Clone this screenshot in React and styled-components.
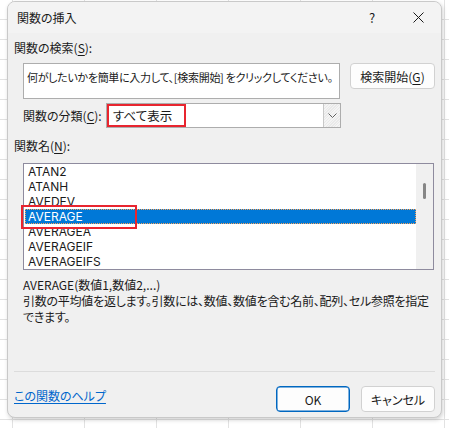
import React from "react";
import styled, { createGlobalStyle } from "styled-components";

const Global = createGlobalStyle`
  html, body {
    margin: 0;
    padding: 0;
  }
  body {
    width: 449px;
    height: 428px;
    overflow: hidden;
    font-family: "Noto Sans CJK JP", "Noto Sans", sans-serif;
    font-size: 12px;
    color: #1a1a1a;
    background-color: #ffffff;
    background-image:
      repeating-linear-gradient(to bottom, transparent 0 19px, #e2e2e2 19px 20px),
      repeating-linear-gradient(to right, transparent 0 12px, #e2e2e2 12px 13px, transparent 13px 72px);
  }
`;

const Page = styled.div`
  padding: 1px 0 0 7px;
`;

const Dialog = styled.div`
  width: 433px;
  height: 415px;
  background: #f0f0f0;
  border: 1px solid #c9c9c9;
  border-radius: 8px;
  box-shadow: 1px 2px 4px rgba(0, 0, 0, 0.18);
  overflow: hidden;
  display: flex;
  flex-direction: column;
  font-feature-settings: "palt";
`;

const TitleBar = styled.div`
  height: 31px;
  background: #f3f3f3;
  display: flex;
  align-items: center;
  padding-left: 9px;
`;

const Title = styled.div`
  flex: 1;
  font-size: 12px;
`;

const TitleButton = styled.div`
  width: 46px;
  height: 31px;
  display: flex;
  align-items: center;
  justify-content: center;
  font-size: 13px;
`;

const Body = styled.div`
  flex: 1;
  display: flex;
  flex-direction: column;
  padding: 7px 6px 0 6px;
`;

const Label = styled.div`
  height: 16px;
  line-height: 16px;
  white-space: nowrap;
`;

const Key = styled.span`
  text-decoration: underline;
  text-underline-offset: 2px;
`;

const SearchRow = styled.div`
  display: flex;
  align-items: flex-start;
  margin: 7px 0 0 9px;
`;

const SearchBox = styled.div`
  background: #fff;
  border: 1px solid #adadad;
  padding: 5px 3px 0 3px;
  box-sizing: border-box;
  width: 317px;
  height: 36px;
  line-height: 16px;
  font-size: 11px;
  white-space: nowrap;
  overflow: hidden;
  letter-spacing: -0.3px;
`;

const Button = styled.div`
  width: ${(p) => p.w}px;
  height: 24px;
  margin-left: ${(p) => p.ml || 0}px;
  background: #fdfdfd;
  border: 1px solid ${(p) => (p.primary ? "#0067c0" : "#d1d1d1")};
  box-shadow: ${(p) => (p.primary ? "inset 0 0 0 0.5px #0067c0" : "none")};
  border-radius: 4px;
  display: flex;
  align-items: center;
  justify-content: center;
  font-size: 12px;
  white-space: nowrap;
`;

const CategoryRow = styled.div`
  display: flex;
  align-items: center;
  margin: 4px 0 0 9px;
  height: 25px;
`;

const SelectBox = styled.div`
  position: relative;
  margin-left: auto;
  margin-right: 94px;
  width: 235px;
  height: 25px;
  box-sizing: border-box;
  background: #fff;
  border: 1px solid #adadad;
  display: flex;
  align-items: center;
`;

const SelectText = styled.div`
  flex: 1;
  padding-left: 6px;
  font-size: 12.5px;
`;

const DropButton = styled.div`
  width: 16px;
  height: 23px;
  border-left: 1px solid #c8c8c8;
  background: repeating-linear-gradient(135deg, #f4f4f4 0 1px, #e9e9e9 1px 2px);
  display: flex;
  align-items: center;
  justify-content: center;
`;

const Highlight = styled.div`
  position: absolute;
  left: ${(p) => p.x}px;
  top: ${(p) => p.y}px;
  width: ${(p) => p.w}px;
  height: ${(p) => p.h}px;
  border: 2px solid #e8252f;
  box-sizing: border-box;
  pointer-events: none;
`;

const ListBox = styled.div`
  position: relative;
  margin: 9px 0 0 9px;
  width: 411px;
  height: 107px;
  box-sizing: border-box;
  border: 1px solid #8e8b9e;
  background: #fff;
  display: flex;
`;

const Items = styled.div`
  flex: 1;
  padding: 0 0 0 1px;
`;

const Item = styled.div`
  height: 15px;
  line-height: 15px;
  padding-left: 3px;
  box-sizing: border-box;
  font-family: Inter, "Noto Sans", sans-serif;
  font-size: 12px;
  color: ${(p) => (p.selected ? "#fff" : "#1a1a1a")};
  background: ${(p) => (p.selected ? "#0078d7" : "transparent")};
  outline: ${(p) => (p.selected ? "1px dotted #f9a35a" : "none")};
  outline-offset: -1px;
`;

const ScrollTrack = styled.div`
  width: 17px;
  background: #f0f0f0;
  display: flex;
  justify-content: center;
  padding-top: 19px;
`;

const Thumb = styled.div`
  width: 3px;
  height: 16px;
  border-radius: 2px;
  background: #868686;
`;

const Syntax = styled.div`
  margin: 6px 0 0 9px;
  line-height: 17px;
`;

const Description = styled.div`
  margin-left: 9px;
  line-height: 16px;
  white-space: nowrap;
  letter-spacing: -0.25px;
`;

const Separator = styled.div`
  margin-top: auto;
  height: 1px;
  background: #dcdcdc;
`;

const Footer = styled.div`
  height: 45px;
  display: flex;
  align-items: flex-start;
  padding-top: 14px;
  box-sizing: border-box;
`;

const HelpLink = styled.a`
  flex: 1;
  color: #0066cc;
  text-decoration: underline;
  text-underline-offset: 2px;
  font-size: 12px;
  line-height: 16px;
  margin-top: 2px;
`;

const items = ["ATAN2", "ATANH", "AVEDEV", "AVERAGE", "AVERAGEA", "AVERAGEIF", "AVERAGEIFS"];

export default function App() {
  return (
    <Page>
      <Global />
      <Dialog>
        <TitleBar>
          <Title>関数の挿入</Title>
          <TitleButton>?</TitleButton>
          <TitleButton>
            <svg width="11" height="11" viewBox="0 0 11 11">
              <path d="M0.5 0.5 L10.5 10.5 M10.5 0.5 L0.5 10.5" stroke="#1a1a1a" strokeWidth="1" />
            </svg>
          </TitleButton>
        </TitleBar>
        <Body>
          <Label>
            関数の検索(<Key>S</Key>):
          </Label>
          <SearchRow>
            <SearchBox>何がしたいかを簡単に入力して、[検索開始] をクリックしてください。</SearchBox>
            <Button w={83} ml={10}>
              検索開始(<Key>G</Key>)
            </Button>
          </SearchRow>
          <CategoryRow>
            <Label>
              関数の分類(<Key>C</Key>):
            </Label>
            <SelectBox>
              <SelectText>すべて表示</SelectText>
              <DropButton>
                <svg width="9" height="6" viewBox="0 0 9 6">
                  <path d="M0.5 0.5 L4.5 4.5 L8.5 0.5" fill="none" stroke="#606060" strokeWidth="1" />
                </svg>
              </DropButton>
              <Highlight x={0} y={0} w={79} h={23} />
            </SelectBox>
          </CategoryRow>
          <Label style={{ marginTop: 10 }}>
            関数名(<Key>N</Key>):
          </Label>
          <ListBox>
            <Items>
              {items.map((name) => (
                <Item key={name} selected={name === "AVERAGE"}>
                  {name}
                </Item>
              ))}
            </Items>
            <ScrollTrack>
              <Thumb />
            </ScrollTrack>
            <Highlight x={-3} y={41} w={116} h={24} />
          </ListBox>
          <Syntax>AVERAGE(数値1,数値2,...)</Syntax>
          <Description>
            引数の平均値を返します。引数には、数値、数値を含む名前、配列、セル参照を指定
            <br />
            できます。
          </Description>
          <Separator />
          <Footer>
            <HelpLink>この関数のヘルプ</HelpLink>
            <Button w={72} primary>
              OK
            </Button>
            <Button w={72} ml={11}>
              キャンセル
            </Button>
          </Footer>
        </Body>
      </Dialog>
    </Page>
  );
}
